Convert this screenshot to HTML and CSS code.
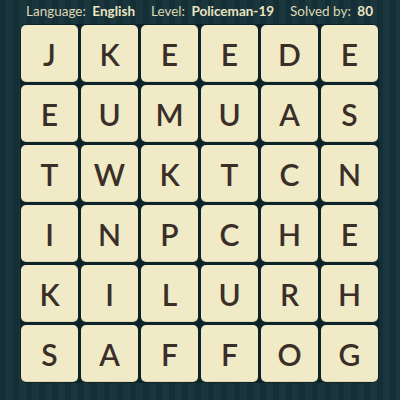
FILE: index.html
```html
<!DOCTYPE html>
<html>
<head>
<meta charset="utf-8">
<link rel="stylesheet" href="styles.css">
</head>
<body>
<div class="page">
  <div class="header">
    <span class="item"><span class="label">Language:</span> <b>English</b></span>
    <span class="item"><span class="label">Level:</span> <b>Policeman-19</b></span>
    <span class="item"><span class="label">Solved by:</span> <b>80</b></span>
  </div>
  <div class="grid">
    <div class="tile">J</div><div class="tile">K</div><div class="tile">E</div><div class="tile">E</div><div class="tile">D</div><div class="tile">E</div>
    <div class="tile">E</div><div class="tile">U</div><div class="tile">M</div><div class="tile">U</div><div class="tile">A</div><div class="tile">S</div>
    <div class="tile">T</div><div class="tile">W</div><div class="tile">K</div><div class="tile">T</div><div class="tile">C</div><div class="tile">N</div>
    <div class="tile">I</div><div class="tile">N</div><div class="tile">P</div><div class="tile">C</div><div class="tile">H</div><div class="tile">E</div>
    <div class="tile">K</div><div class="tile">I</div><div class="tile">L</div><div class="tile">U</div><div class="tile">R</div><div class="tile">H</div>
    <div class="tile">S</div><div class="tile">A</div><div class="tile">F</div><div class="tile">F</div><div class="tile">O</div><div class="tile">G</div>
  </div>
</div>
</body>
</html>
```
FILE: styles.css
```css
html, body {
  margin: 0;
  padding: 0;
}
body {
  width: 400px;
  height: 400px;
  overflow: hidden;
  background-color: #163239;
  background-image: repeating-linear-gradient(90deg, rgba(0,0,0,0.06) 0px, rgba(0,0,0,0.06) 6px, rgba(255,255,255,0.02) 6px, rgba(255,255,255,0.02) 13px);
  font-family: "Lato", "Open Sans", sans-serif;
}
.page {
  display: flex;
  flex-direction: column;
}
.header {
  height: 23px;
  display: flex;
  justify-content: space-between;
  align-items: center;
  padding: 0 27px 0 26px;
  color: #ebe4c3;
  font-size: 13.5px;
  line-height: 1;
}
.header b {
  font-weight: 700;
  margin-left: 3px;
}
.label {
  font-weight: 400;
  color: #ddd7b6;
}
.grid {
  margin: 2px 0 0 21px;
  width: 357px;
  display: grid;
  grid-template-columns: repeat(6, 57px);
  grid-auto-rows: 57px;
  gap: 3px;
  background: #0c2329;
  border-radius: 6px;
  box-shadow: 0 0 0 1px #0c2329;
}
.tile {
  background: #f1eac7;
  border-radius: 5px;
  box-shadow: inset 0 -1px 0 rgba(120,100,60,0.15);
  display: flex;
  align-items: center;
  justify-content: center;
  color: #3a2f28;
  font-size: 30px;
  font-weight: 600;
}
```
